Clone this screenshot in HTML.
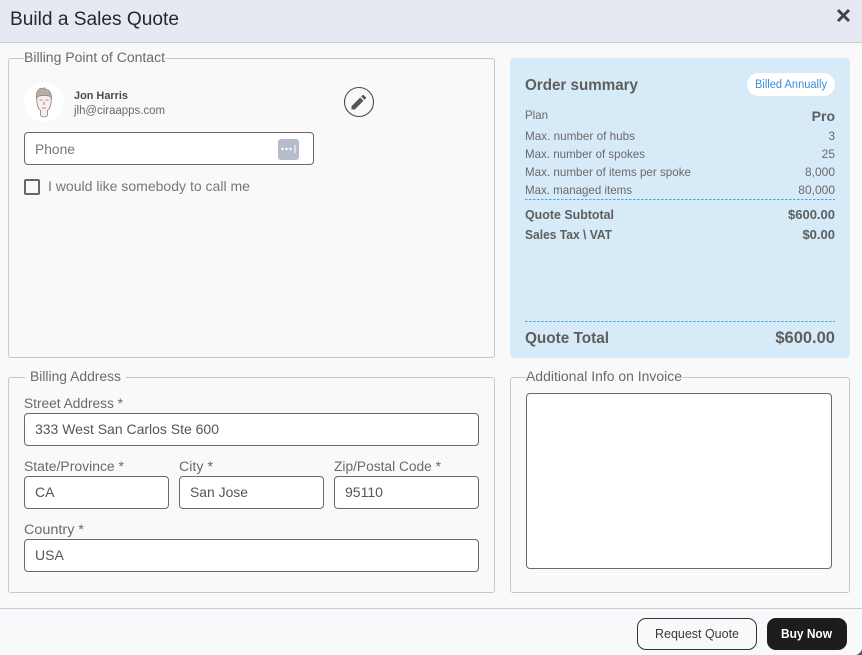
<!DOCTYPE html>
<html lang="en"><head><meta charset="utf-8"><title>Build a Sales Quote</title>
<style>
html,body{margin:0;padding:0;width:862px;height:655px;overflow:hidden;background:#f9f9f9}
.b{position:absolute;box-sizing:border-box}
.f{border:1px solid #c8c8c8;border-radius:3px}
.i{background:#fff;border:1px solid #6a6a6a;border-radius:4px}
svg{position:absolute;left:0;top:0}
text{font-family:"Liberation Sans",sans-serif;white-space:pre}
.l{fill:#6a6a6a;font-size:13.5px}
.v{fill:#555;font-size:14px}
.s{fill:#6a6a6a;font-size:12px}
.h{fill:#5e5e5e;font-weight:bold}
</style></head><body>
<div class="b" style="left:0;top:0;width:862px;height:43px;background:#e6e9f1;border-bottom:1px solid #c9ccd3"></div>
<div class="b" style="left:0;top:362px;width:862px;height:293px;background:#f8f9fa"></div>
<div class="b" style="left:0;top:608px;width:862px;height:1px;background:#c9ccd3"></div>
<div class="b f" style="left:8px;top:58px;width:487px;height:300px"></div>
<div class="b" style="left:24px;top:52px;width:141px;height:12px;background:#f9f9f9"></div>
<div class="b" style="left:510px;top:58px;width:340px;height:300px;background:#d6eaf8;border-radius:4px"></div>
<div class="b" style="left:747px;top:73px;width:88px;height:23px;background:#fff;border-radius:12px"></div>
<div class="b f" style="left:8px;top:377px;width:487px;height:216px"></div>
<div class="b" style="left:25px;top:372px;width:101px;height:12px;background:#f8f9fa"></div>
<div class="b f" style="left:510px;top:377px;width:340px;height:216px"></div>
<div class="b" style="left:526px;top:372px;width:156px;height:12px;background:#f8f9fa"></div>
<div class="b i" style="left:24px;top:132px;width:290px;height:33px"></div>
<div class="b" style="left:278px;top:139px;width:21px;height:21px;background:#b5bccb;border-radius:3px"></div>
<div class="b" style="left:24px;top:179px;width:16px;height:16px;border:2px solid #666;border-radius:2px;background:#fafafa"></div>
<div class="b i" style="left:24px;top:413px;width:455px;height:33px"></div>
<div class="b i" style="left:24px;top:476px;width:145px;height:33px"></div>
<div class="b i" style="left:179px;top:476px;width:145px;height:33px"></div>
<div class="b i" style="left:334px;top:476px;width:145px;height:33px"></div>
<div class="b i" style="left:24px;top:539px;width:455px;height:33px"></div>
<div class="b i" style="left:526px;top:393px;width:306px;height:176px"></div>
<div class="b" style="left:637px;top:618px;width:120px;height:32px;border:1px solid #333;border-radius:9px;background:#f8f9fa"></div>
<div class="b" style="left:767px;top:618px;width:80px;height:32px;background:#1c1c1c;border-radius:9px"></div>
<svg width="862" height="655" viewBox="0 0 862 655">
<text x="10" y="25" font-size="19" fill="#26282c" textLength="169" lengthAdjust="spacingAndGlyphs">Build a Sales Quote</text>
<path d="M838 10l11 11M849 10l-11 11" stroke="#444" stroke-width="3" fill="none"/>
<text class="l" x="24" y="62" textLength="141" lengthAdjust="spacingAndGlyphs">Billing Point of Contact</text>

<circle cx="44" cy="102" r="20" fill="#fff"/>
<path d="M36.500 99c-1-6 1-10 4.500-11l1.500 1 2-1.500 1 1.500c4 .5 6.500 4 6 10.500z" fill="#b5aea4" stroke="#8a8078" stroke-width=".6"/>
<path d="M37 97c3-2 11-2 14 0 .5 5 0 10-3 13-2.500 2-5.500 2-8 0-3-3-3.500-8-3-13z" fill="#f9eeec" stroke="#8a8078" stroke-width=".8"/>
<path d="M40.500 110.500v3.500c-.5 1.500 1.500 3 3.500 3s4-1.500 3.500-3v-3.500" fill="#f9eeec" stroke="#8a8078" stroke-width=".8"/>
<path d="M39.500 100h3M45.500 100h3M44 101.500v3.500M42 108h4" stroke="#777" stroke-width=".8" fill="none"/>

<text x="74" y="99" font-size="11" font-weight="bold" fill="#4a4a4a" textLength="54" lengthAdjust="spacingAndGlyphs">Jon Harris</text>
<text x="74" y="114" font-size="11.500" fill="#6a6a6a" textLength="91" lengthAdjust="spacingAndGlyphs">jlh@ciraapps.com</text>

<circle cx="359" cy="102" r="14.500" fill="none" stroke="#4a4a4a" stroke-width="1.100"/>
<path d="M351.500 109.500v-3.300l8.700-8.700 3.300 3.300-8.700 8.700zM361.200 96.500l1.300-1.300c.4-.4 1-.4 1.400 0l1.900 1.900c.4.4.4 1 0 1.400l-1.300 1.300z" fill="#555"/>

<text x="35" y="154" font-size="14" fill="#777" textLength="40" lengthAdjust="spacingAndGlyphs">Phone</text>
<circle cx="282.500" cy="149" r="1.200" fill="#fff"/><circle cx="286.500" cy="149" r="1.200" fill="#fff"/><circle cx="290.500" cy="149" r="1.200" fill="#fff"/>
<rect x="294.500" y="145" width="1" height="8" fill="#fff"/>
<text x="48" y="191" font-size="14" fill="#777" textLength="202" lengthAdjust="spacingAndGlyphs">I would like somebody to call me</text>

<text class="h" x="525" y="90" font-size="15.500" textLength="113" lengthAdjust="spacingAndGlyphs">Order summary</text>
<text x="755" y="88" font-size="11.500" fill="#3b8fd9" textLength="72" lengthAdjust="spacingAndGlyphs">Billed Annually</text>
<text class="s" x="525" y="119" textLength="23" lengthAdjust="spacingAndGlyphs">Plan</text>
<text class="h" x="835" y="121" font-size="14" text-anchor="end">Pro</text>
<text class="s" x="525" y="140" textLength="110" lengthAdjust="spacingAndGlyphs">Max. number of hubs</text>
<text class="s" x="835" y="140" text-anchor="end">3</text>
<text class="s" x="525" y="158" textLength="120" lengthAdjust="spacingAndGlyphs">Max. number of spokes</text>
<text class="s" x="835" y="158" text-anchor="end">25</text>
<text class="s" x="525" y="176" textLength="166" lengthAdjust="spacingAndGlyphs">Max. number of items per spoke</text>
<text class="s" x="835" y="176" text-anchor="end">8,000</text>
<text class="s" x="525" y="194" textLength="107" lengthAdjust="spacingAndGlyphs">Max. managed items</text>
<text class="s" x="835" y="194" text-anchor="end">80,000</text>
<path d="M525 199.500H835M525 321.500H835" stroke="#45a9d2" stroke-width="1" stroke-dasharray="2.500 1.500" fill="none"/>
<text class="h" x="525" y="219" font-size="13" textLength="89" lengthAdjust="spacingAndGlyphs">Quote Subtotal</text>
<text class="h" x="835" y="219" font-size="13" text-anchor="end">$600.00</text>
<text class="h" x="525" y="239" font-size="13" textLength="87" lengthAdjust="spacingAndGlyphs">Sales Tax \ VAT</text>
<text class="h" x="835" y="239" font-size="13" text-anchor="end">$0.00</text>
<text class="h" x="525" y="343" font-size="15.500" textLength="84" lengthAdjust="spacingAndGlyphs">Quote Total</text>
<text class="h" x="835" y="343" font-size="16.500" text-anchor="end">$600.00</text>

<text class="l" x="30" y="381" textLength="91" lengthAdjust="spacingAndGlyphs">Billing Address</text>
<text class="l" x="526" y="381" textLength="156" lengthAdjust="spacingAndGlyphs">Additional Info on Invoice</text>
<text class="l" x="24" y="408" textLength="99" lengthAdjust="spacingAndGlyphs">Street Address *</text>
<text class="l" x="24" y="471" textLength="100" lengthAdjust="spacingAndGlyphs">State/Province *</text>
<text class="l" x="179" y="471" textLength="34" lengthAdjust="spacingAndGlyphs">City *</text>
<text class="l" x="334" y="471" textLength="107" lengthAdjust="spacingAndGlyphs">Zip/Postal Code *</text>
<text class="l" x="24" y="534" textLength="60" lengthAdjust="spacingAndGlyphs">Country *</text>
<text class="v" x="35" y="434" textLength="184" lengthAdjust="spacingAndGlyphs">333 West San Carlos Ste 600</text>
<text class="v" x="35" y="497">CA</text>
<text class="v" x="190" y="497" textLength="58" lengthAdjust="spacingAndGlyphs">San Jose</text>
<text class="v" x="345" y="497" textLength="38" lengthAdjust="spacingAndGlyphs">95110</text>
<text class="v" x="35" y="560">USA</text>

<text x="655" y="638" font-size="12.500" fill="#3a3a3a" textLength="84" lengthAdjust="spacingAndGlyphs">Request Quote</text>
<text x="781" y="638" font-size="12.500" font-weight="bold" fill="#fff" textLength="51" lengthAdjust="spacingAndGlyphs">Buy Now</text>
<path d="M862 649v6h-6c3-1 5-3 6-6z" fill="#555"/>
</svg>
</body></html>
